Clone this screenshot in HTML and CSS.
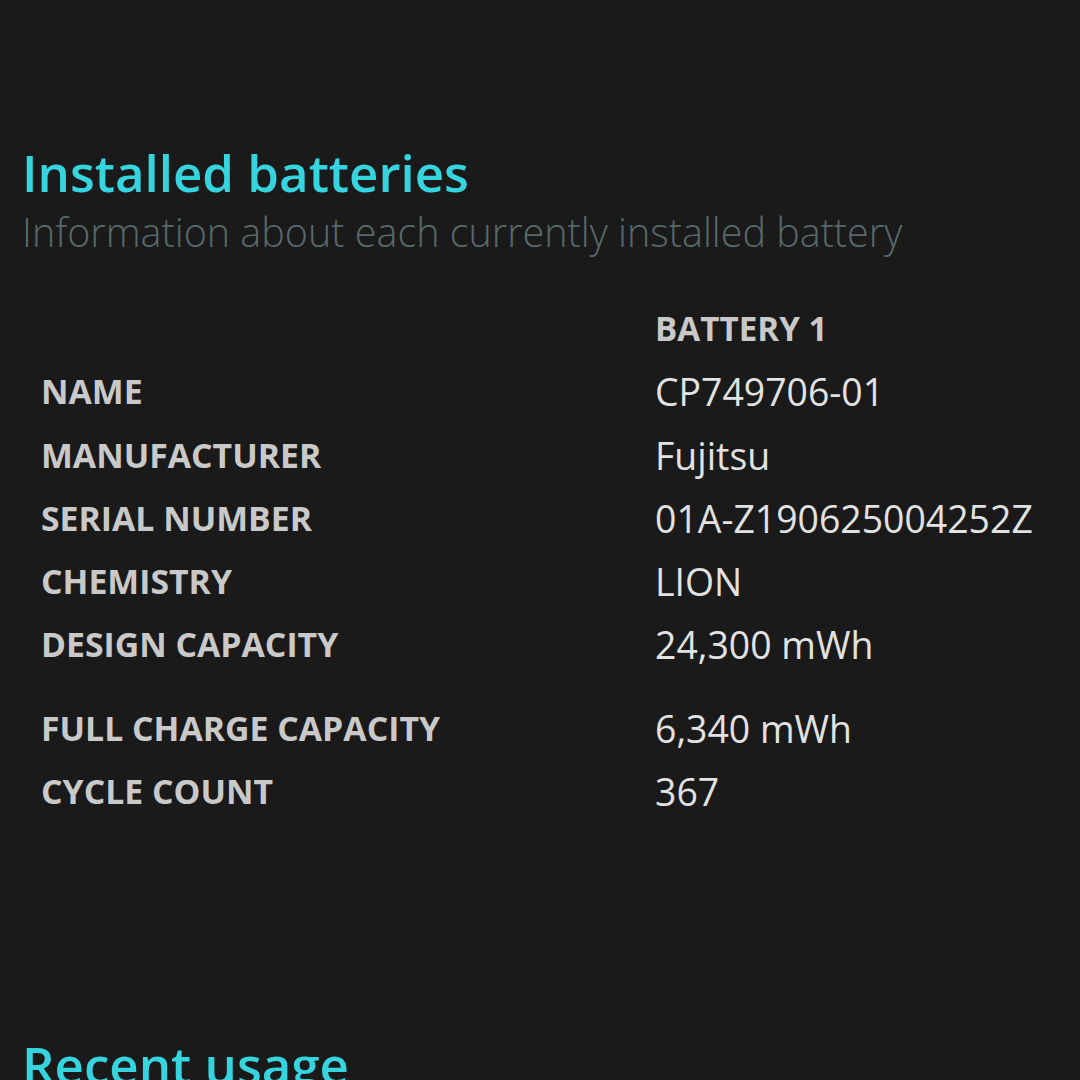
FILE: index.html
```html
<!DOCTYPE html>
<html>
<head>
<meta charset="utf-8">
<link rel="stylesheet" href="styles.css">
</head>
<body>
<main class="page">
  <section class="section">
    <h1 class="title">Installed batteries</h1>
    <p class="subtitle">Information about each currently installed battery</p>
    <div class="table">
      <div class="row head"><span class="label"></span><span class="value bold">BATTERY 1</span></div>
      <div class="row"><span class="label">NAME</span><span class="value">CP749706-01</span></div>
      <div class="row"><span class="label">MANUFACTURER</span><span class="value">Fujitsu</span></div>
      <div class="row"><span class="label">SERIAL NUMBER</span><span class="value">01A-Z190625004252Z</span></div>
      <div class="row"><span class="label">CHEMISTRY</span><span class="value">LION</span></div>
      <div class="row"><span class="label">DESIGN CAPACITY</span><span class="value">24,300 mWh</span></div>
      <div class="row spaced"><span class="label">FULL CHARGE CAPACITY</span><span class="value">6,340 mWh</span></div>
      <div class="row"><span class="label">CYCLE COUNT</span><span class="value">367</span></div>
    </div>
  </section>
  <section class="section next">
    <h1 class="title">Recent usage</h1>
  </section>
</main>
</body>
</html>
```
FILE: styles.css
```css
html, body {
  margin: 0;
  padding: 0;
  background: #1a1a1a;
  height: 100%;
  overflow: hidden;
}
.page {
  font-family: "Open Sans", "Noto Sans", sans-serif;
  padding-top: 146px;
}
.section {
  padding-left: 22px;
}
.title {
  margin: 0;
  font-size: 51px;
  line-height: 52px;
  font-weight: 600;
  color: #35d4de;
}
.subtitle {
  margin: 0;
  padding-top: 12px;
  font-size: 39.5px;
  line-height: 44px;
  font-weight: 300;
  color: #58696b;
}
.table {
  padding-top: 43px;
  padding-left: 19px;
}
.row {
  display: grid;
  grid-template-columns: 614px auto;
  line-height: 63.3px;
  height: 63.3px;
}
.row.spaced {
  margin-top: 20px;
}
.label {
  font-size: 33.8px;
  font-weight: 700;
  color: #c9c9c9;
}
.value {
  font-size: 37.4px;
  font-weight: 400;
  color: #e2e2e2;
}
.value.bold {
  font-size: 33.2px;
  font-weight: 700;
  color: #c9c9c9;
}
.next {
  padding-top: 215px;
}
```
